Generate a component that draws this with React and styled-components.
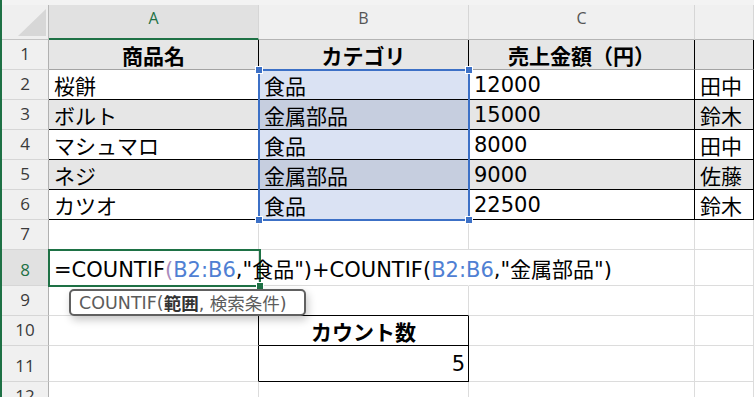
import React from 'react';
import styled, { createGlobalStyle } from 'styled-components';

const GREEN = '#1e7145';
const GRID = '#dcdcdc';
const BLACK = '#000000';
const HEADLINE = '#a3a3a3';
const SELBLUE = '#3c70c6';

const fills = {
  gray: '#e6e6e6',
  sel: '#dae2f3',
  selGray: '#c6cedf',
};

const Global = createGlobalStyle`
  html, body { margin: 0; padding: 0; background: #ffffff; overflow: hidden; }
  body { width: 754px; height: 397px; }
`;

const Sheet = styled.div`
  position: relative;
  display: grid;
  grid-template-columns: 47px 210px 210px 226px 59px;
  grid-template-rows: 5px 35px repeat(7, 30px) 36px 30px 30px 36px 30px;
  width: 752px;
  border-left: 2px solid ${GREEN};
  background: #ffffff;
  font-family: "DejaVu Sans", "Noto Sans CJK JP", sans-serif;
  font-size: 21px;
  color: #000;
`;

const TopStrip = styled.div`
  grid-column: 1 / -1;
  background: #f3f3f3;
`;

const Corner = styled.div`
  box-sizing: border-box;
  display: flex;
  justify-content: flex-end;
  align-items: flex-end;
  padding: 0 2px 3px 0;
  background: #efefef;
  border-right: 1px solid #b8b8b8;
  border-bottom: 1px solid #c4c4c4;
`;

const ColHeader = styled.div`
  box-sizing: border-box;
  display: flex;
  justify-content: center;
  align-items: flex-start;
  padding-top: 2px;
  font-family: "Open Sans", "DejaVu Sans", sans-serif;
  font-size: 16px;
  background: ${p => (p.$active ? '#e1e1e1' : '#f0f0f0')};
  color: ${p => (p.$active ? GREEN : '#555555')};
  border-right: 1px solid #d6d6d6;
  border-bottom: ${p => (p.$active ? `2px solid ${GREEN}` : '1px solid #b4b4b4')};
`;

const RowHeader = styled.div`
  box-sizing: border-box;
  display: flex;
  justify-content: center;
  align-items: flex-end;
  padding-bottom: 4px;
  font-family: "Open Sans", "DejaVu Sans", sans-serif;
  font-size: 17px;
  background: ${p => (p.$active ? '#e1e1e1' : '#f0f0f0')};
  color: ${p => (p.$active ? GREEN : '#3a3a3a')};
  border-right: 1px solid #b0b0b0;
  border-bottom: 1px solid #d6d6d6;
`;

const Cell = styled.div`
  box-sizing: border-box;
  min-width: 0;
  display: flex;
  align-items: center;
  justify-content: ${p =>
    p.$align === 'center' ? 'center' : p.$align === 'right' ? 'flex-end' : 'flex-start'};
  padding: 1px ${p => (p.$align === 'right' ? '3px' : '5px')} 0 5px;
  white-space: nowrap;
  overflow: ${p => (p.$spill ? 'visible' : 'hidden')};
  font-weight: ${p => (p.$bold ? 700 : 400)};
  background: ${p => fills[p.$fill] || 'transparent'};
  border-right: 1px solid ${p => p.$right || GRID};
  border-bottom: 1px solid ${p => p.$bottom || GRID};
`;

const Formula = styled.span`
  position: relative;
  z-index: 1;
`;

const Ref = styled.span`
  color: #4f80d3;
`;

const Paren = styled.span`
  color: ${p => p.$tone};
`;

const Selection = styled.div`
  position: absolute;
  left: 256px;
  top: 69px;
  width: 212px;
  height: 152px;
  box-sizing: border-box;
  border: 2px solid ${SELBLUE};
  pointer-events: none;
`;

const Handle = styled.div`
  position: absolute;
  width: 6px;
  height: 6px;
  background: ${p => p.$color};
  box-shadow: 0 0 0 1px #ffffff;
  ${p => (p.$top ? 'top: -4px;' : 'bottom: -4px;')}
  ${p => (p.$left ? 'left: -4px;' : 'right: -4px;')}
`;

const ActiveBox = styled.div`
  position: absolute;
  left: 46px;
  top: 249px;
  width: 213px;
  height: 38px;
  box-sizing: border-box;
  border: 2px solid ${GREEN};
  pointer-events: none;
`;

const Tooltip = styled.div`
  position: absolute;
  left: 67px;
  top: 289px;
  width: 237px;
  height: 27px;
  box-sizing: border-box;
  display: flex;
  align-items: center;
  padding-left: 8px;
  background: #ffffff;
  border: 2px solid #606060;
  border-radius: 5px;
  box-shadow: 2px 4px 8px rgba(0, 0, 0, 0.22);
  font-family: "DejaVu Sans", "Noto Sans CJK JP", sans-serif;
  font-size: 17.5px;
  color: #5c5c5c;
  white-space: nowrap;
  z-index: 3;
`;

const Strong = styled.b`
  color: #333333;
  font-weight: 700;
`;

const dataRows = [
  { cells: ['桜餅', '食品', '12000', '田中'], gray: false },
  { cells: ['ボルト', '金属部品', '15000', '鈴木'], gray: true },
  { cells: ['マシュマロ', '食品', '8000', '田中'], gray: false },
  { cells: ['ネジ', '金属部品', '9000', '佐藤'], gray: true },
  { cells: ['カツオ', '食品', '22500', '鈴木'], gray: false },
];

export default function App() {
  return (
    <>
      <Global />
      <Sheet>
        <TopStrip />
        <Corner>
          <svg width="28" height="27" viewBox="0 0 28 27">
            <polygon points="0,27 28,27 28,0" fill="#d7d7d7" />
          </svg>
        </Corner>
        <ColHeader $active>A</ColHeader>
        <ColHeader>B</ColHeader>
        <ColHeader>C</ColHeader>
        <ColHeader />

        {/* Row 1 */}
        <RowHeader>1</RowHeader>
        <Cell $fill="gray" $bold $align="center" $right={BLACK} $bottom={HEADLINE}>商品名</Cell>
        <Cell $fill="gray" $bold $align="center" $right={BLACK} $bottom={HEADLINE}>カテゴリ</Cell>
        <Cell $fill="gray" $bold $align="center" $right={BLACK} $bottom={HEADLINE}>売上金額（円）</Cell>
        <Cell $fill="gray" $bold $right={BLACK} $bottom={HEADLINE} />

        {/* Rows 2-6 */}
        {dataRows.map((r, i) => (
          <React.Fragment key={i}>
            <RowHeader>{i + 2}</RowHeader>
            <Cell $fill={r.gray ? 'gray' : undefined} $right={BLACK} $bottom={BLACK}>{r.cells[0]}</Cell>
            <Cell $fill={r.gray ? 'selGray' : 'sel'} $right={BLACK} $bottom={BLACK}>{r.cells[1]}</Cell>
            <Cell $fill={r.gray ? 'gray' : undefined} $right={BLACK} $bottom={BLACK}>{r.cells[2]}</Cell>
            <Cell $fill={r.gray ? 'gray' : undefined} $right={BLACK} $bottom={BLACK}>{r.cells[3]}</Cell>
          </React.Fragment>
        ))}

        {/* Row 7 */}
        <RowHeader>7</RowHeader>
        <Cell />
        <Cell />
        <Cell />
        <Cell />

        {/* Row 8 */}
        <RowHeader $active>8</RowHeader>
        <Cell $spill>
          <Formula>
            =COUNTIF<Paren $tone="#a98bbd">(</Paren><Ref>B2:B6</Ref>,"食品")+COUNTIF
            <Paren $tone="#000000">(</Paren><Ref>B2:B6</Ref>,"金属部品")
          </Formula>
        </Cell>
        <Cell $right="transparent" />
        <Cell />
        <Cell />

        {/* Row 9 */}
        <RowHeader>9</RowHeader>
        <Cell />
        <Cell $bottom={BLACK} />
        <Cell />
        <Cell />

        {/* Row 10 */}
        <RowHeader>10</RowHeader>
        <Cell $right={BLACK} />
        <Cell $bold $align="center" $right={BLACK} $bottom={BLACK}>カウント数</Cell>
        <Cell />
        <Cell />

        {/* Row 11 */}
        <RowHeader>11</RowHeader>
        <Cell $right={BLACK} />
        <Cell $align="right" $right={BLACK} $bottom={BLACK}>5</Cell>
        <Cell />
        <Cell />

        {/* Row 12 */}
        <RowHeader>12</RowHeader>
        <Cell />
        <Cell />
        <Cell />
        <Cell />

        <Selection>
          <Handle $color={SELBLUE} $top $left />
          <Handle $color={SELBLUE} $top />
          <Handle $color={SELBLUE} $left />
          <Handle $color={SELBLUE} />
        </Selection>
        <ActiveBox>
          <Handle $color={GREEN} />
        </ActiveBox>
        <Tooltip>
          COUNTIF(<Strong>範囲</Strong>, 検索条件)
        </Tooltip>
      </Sheet>
    </>
  );
}
